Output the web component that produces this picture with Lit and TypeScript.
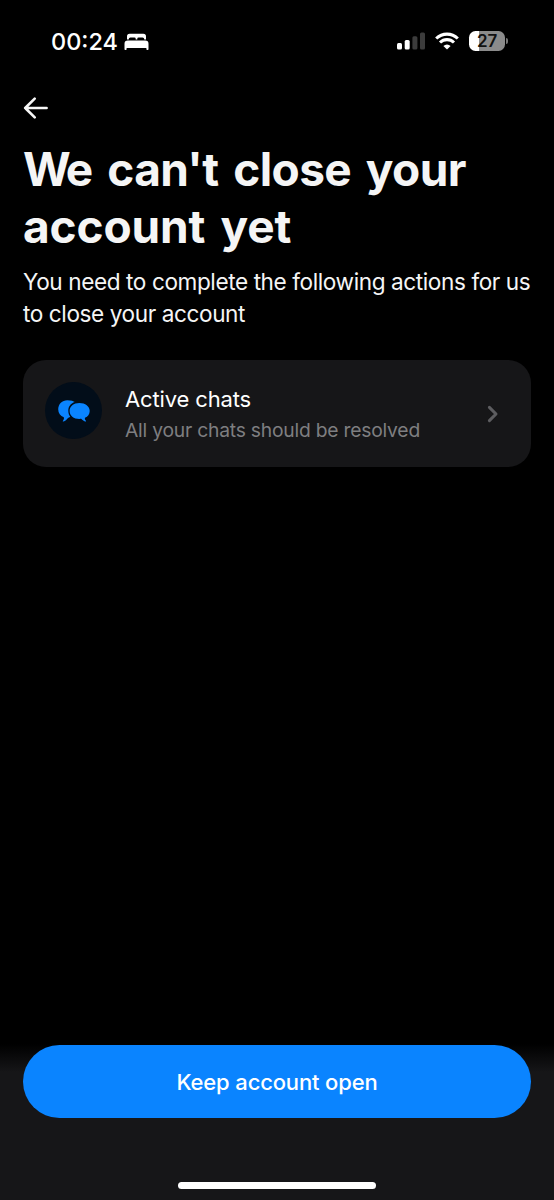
import { LitElement, html, css } from "lit";
import { customElement } from "lit/decorators.js";

@customElement("status-bar")
class StatusBar extends LitElement {
  static styles = css`
    :host { display: flex; height: 82px; box-sizing: border-box; padding: 0 46px 0 51px; align-items: center; color: #fff; }
    .time { font-size: 23.5px; font-weight: 500; line-height: 28px; letter-spacing: 0; margin: 1px 6px 0 0; }
    .bed { margin-top: 2px; }
    .spacer { flex: 1; }
    svg { display: block; flex: none; }
    .wifi { margin: 0 10px 0 10px; }
    .battery { width: 36px; height: 20px; border-radius: 6.5px; background: linear-gradient(90deg, #fff 27%, #8b8b8b 27%); color: #111; font-size: 17px; font-weight: 600; line-height: 20.5px; text-align: center; letter-spacing: -0.2px; }
    .cap { width: 2px; height: 6px; margin-left: 1px; border-radius: 0 2px 2px 0; background: #777; }
  `;
  render() {
    return html`
      <span class="time">00:24</span>
      <svg class="bed" width="25" height="18" viewBox="0 0 25 18" fill="#fff">
        <path d="M3 6.6V3.4Q3 .8 5.6 .8H19.4Q22 .8 22 3.4V6.6H20.2V6Q20.2 4.4 18.6 4.4H14.6Q13.3 4.4 13.3 5.8V6.6H11.7V5.8Q11.7 4.4 10.4 4.4H6.4Q4.8 4.4 4.8 6V6.6Z"/>
        <path d="M3.8 7.5H21.2Q24.5 7.5 24.5 10.8V16.2Q24.5 17 23.7 17H23.2Q22.4 17 22.4 16.2V15H2.6V16.2Q2.6 17 1.8 17H1.3Q.5 17 .5 16.2V10.8Q.5 7.5 3.8 7.5Z"/>
      </svg>
      <span class="spacer"></span>
      <svg width="28" height="18" viewBox="0 0 28 18">
        <rect x="0" y="11" width="5" height="6.6" rx="1.5" fill="#fff"/>
        <rect x="7.7" y="8" width="5" height="9.6" rx="1.5" fill="#fff"/>
        <rect x="15.4" y="4.3" width="5" height="13.3" rx="1.5" fill="#3c3c3c"/>
        <rect x="23" y="0.6" width="5" height="17" rx="1.5" fill="#3c3c3c"/>
      </svg>
      <svg class="wifi" width="24" height="18" viewBox="0 0 24 18" fill="none" stroke="#fff" stroke-width="3.1">
        <path d="M1.2 6.5Q5.8 2.1 12 2.1T22.8 6.5"/>
        <path d="M5 10.5Q8 7.6 12 7.6T19 10.5"/>
        <path d="M12 17.6L8.4 14Q9.9 12.4 12 12.4T15.6 14Z" fill="#fff" stroke="none"/>
      </svg>
      <div class="battery">27</div><span class="cap"></span>
    `;
  }
}

@customElement("action-card")
class ActionCard extends LitElement {
  static properties = { heading: {}, detail: {} };
  declare heading: string;
  declare detail: string;
  static styles = css`
    :host { display: flex; box-sizing: border-box; height: 107px; border-radius: 23px; background: #161618; padding: 22px 32px 22px 22px; }
    .badge { width: 57px; height: 57px; border-radius: 50%; background: #020d19; display: grid; place-items: center; flex: none; }
    .copy { flex: 1; margin-left: 23px; padding-top: 2px; white-space: nowrap; }
    .title { font-size: 22px; line-height: 31px; color: #fff; letter-spacing: -0.14px; }
    .detail { font-size: 19.3px; line-height: 30px; color: #7e7e80; letter-spacing: -0.22px; }
    .chevron { align-self: center; }
    svg { display: block; }
  `;
  render() {
    return html`
      <div class="badge">
        <svg width="32" height="22" viewBox="0 0 32 22" fill="#0a84ff">
          <path d="M9.3 .2C13 .2 15.7 1.1 16.8 2C12.5 3.4 10.3 6.8 10.3 10.5C10.3 13.3 11.1 15.3 12.3 16.9C10.8 17.3 10 17.9 9.1 19C7.9 20.5 6.5 21.4 5.3 21.6C4.7 21.7 4.6 21.1 5 20.7C5.9 19.7 6.2 18.5 5.8 17.3C2.4 16 .2 13.3 .2 9.3C.2 3.9 4.2 .2 9.3 .2Z"/>
          <path d="M21.4 2.9C27.3 2.9 31.7 6.3 31.7 10.9C31.7 14.1 29.8 16.6 27 17.8C26.6 18.9 27 19.9 27.9 20.8C28.3 21.2 28.1 21.7 27.5 21.6C26 21.3 24.5 20.3 23.2 18.8C22.6 18.9 22 18.9 21.4 18.9C15.6 18.9 11.6 15.5 11.6 10.9C11.6 6.3 15.6 2.9 21.4 2.9Z"/>
        </svg>
      </div>
      <div class="copy"><div class="title">${this.heading}</div><div class="detail">${this.detail}</div></div>
      <svg class="chevron" width="12" height="18" viewBox="0 0 12 18" fill="none" stroke="#5d5d60" stroke-width="3" stroke-linecap="round" stroke-linejoin="round"><path d="M2.4 2.4L9 9L2.4 15.6"/></svg>
    `;
  }
}

@customElement("app-root")
class AppRoot extends LitElement {
  static styles = css`
    :host { display: flex; flex-direction: column; box-sizing: border-box; height: 1200px; width: 554px; overflow: hidden; background: #000; color: #f5f5f5; font-family: Inter, "Liberation Sans", sans-serif; }
    svg { display: block; }
    main { flex: 1; padding: 15px 23px 0; }
    h1 { margin: 22px 0 0; font-size: 46px; line-height: 57px; font-weight: 700; letter-spacing: -0.6px; word-spacing: 4.4px; white-space: nowrap; }
    .lead { letter-spacing: -5px; }
    .loose { letter-spacing: -0.12px; }
    p { margin: 11px 0 0; font-size: 22.6px; line-height: 32px; white-space: nowrap; letter-spacing: -0.41px; color: #f5f5f5; }
    action-card { margin-top: 30px; }
    footer { height: 160px; box-sizing: border-box; padding: 5px 23px 11px; display: flex; flex-direction: column; justify-content: space-between; align-items: center; background: linear-gradient(#000 4px, #161618 32px); }
    button { width: 100%; height: 73px; border: 0; padding: 0; border-radius: 37px; background: #0a84ff; color: #fff; font: 500 22px/74px Inter, "Liberation Sans", sans-serif; letter-spacing: -0.15px; }
    .home { width: 198px; height: 7.5px; border-radius: 4px; background: #fff; }
  `;
  render() {
    return html`
      <status-bar></status-bar>
      <main>
        <svg width="26" height="22" viewBox="0 0 26 22" fill="none" stroke="#f7f7f7" stroke-width="2.6" stroke-linecap="round" stroke-linejoin="round"><path d="M23.6 11H2.2M11.7 1.6L2.2 11L11.7 20.4"/></svg>
        <h1><span class="lead">W</span>e can't close your<br><span class="loose">account yet</span></h1>
        <p>You need to complete the following actions for us<br>to close your account</p>
        <action-card heading="Active chats" detail="All your chats should be resolved"></action-card>
      </main>
      <footer><button>Keep account open</button><div class="home"></div></footer>
    `;
  }
}
